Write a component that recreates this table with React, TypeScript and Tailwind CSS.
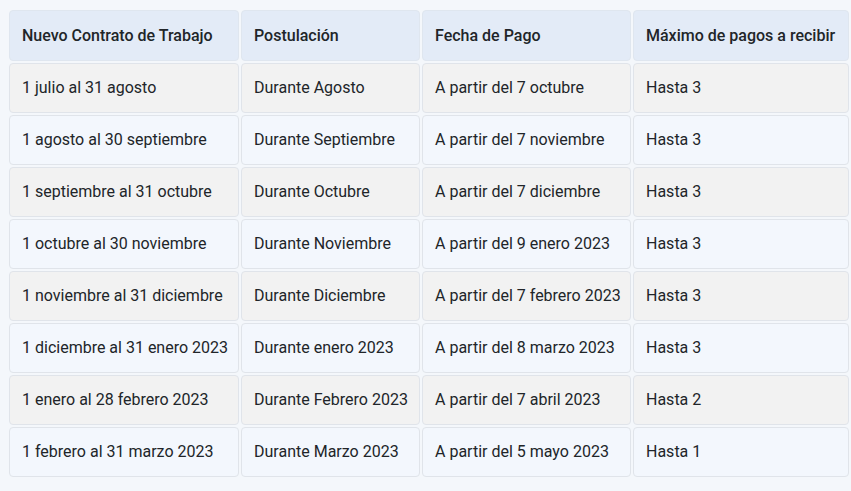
import React from "react";

const rows: string[][] = [
  ["1 julio al 31 agosto", "Durante Agosto", "A partir del 7 octubre", "Hasta 3"],
  ["1 agosto al 30 septiembre", "Durante Septiembre", "A partir del 7 noviembre", "Hasta 3"],
  ["1 septiembre al 31 octubre", "Durante Octubre", "A partir del 7 diciembre", "Hasta 3"],
  ["1 octubre al 30 noviembre", "Durante Noviembre", "A partir del 9 enero 2023", "Hasta 3"],
  ["1 noviembre al 31 diciembre", "Durante Diciembre", "A partir del 7 febrero 2023", "Hasta 3"],
  ["1 diciembre al 31 enero 2023", "Durante enero 2023", "A partir del 8 marzo 2023", "Hasta 3"],
  ["1 enero al 28 febrero 2023", "Durante Febrero 2023", "A partir del 7 abril 2023", "Hasta 2"],
  ["1 febrero al 31 marzo 2023", "Durante Marzo 2023", "A partir del 5 mayo 2023", "Hasta 1"],
];

const headers = ["Nuevo Contrato de Trabajo", "Postulación", "Fecha de Pago", "Máximo de pagos a recibir"];

export default function App() {
  return (
    <div
      className="w-[851px] h-[491px] bg-[#f4f7fb] overflow-hidden pt-[10px] pl-[9px]"
      style={{ fontFamily: "Roboto, 'Liberation Sans', sans-serif" }}
    >
      <div className="grid grid-cols-[230px_179px_209px_216px] gap-[2px] w-[840px]">
        {headers.map((h) => (
          <div
            key={h}
            className="h-[51px] flex items-center px-[12px] bg-[#e3ebf7] border border-[#dfe6ef] rounded-[4px] text-[16px] font-medium text-[#212529] whitespace-nowrap"
          >
            {h}
          </div>
        ))}
        {rows.map((r, i) =>
          r.map((c, j) => (
            <div
              key={`${i}-${j}`}
              className={`h-[50px] flex items-center px-[12px] border border-[#e0e4ea] rounded-[4px] text-[16px] text-[#212529] whitespace-nowrap ${
                i % 2 === 0 ? "bg-[#f2f2f2]" : "bg-[#f3f7fd]"
              }`}
            >
              {c}
            </div>
          ))
        )}
      </div>
    </div>
  );
}
